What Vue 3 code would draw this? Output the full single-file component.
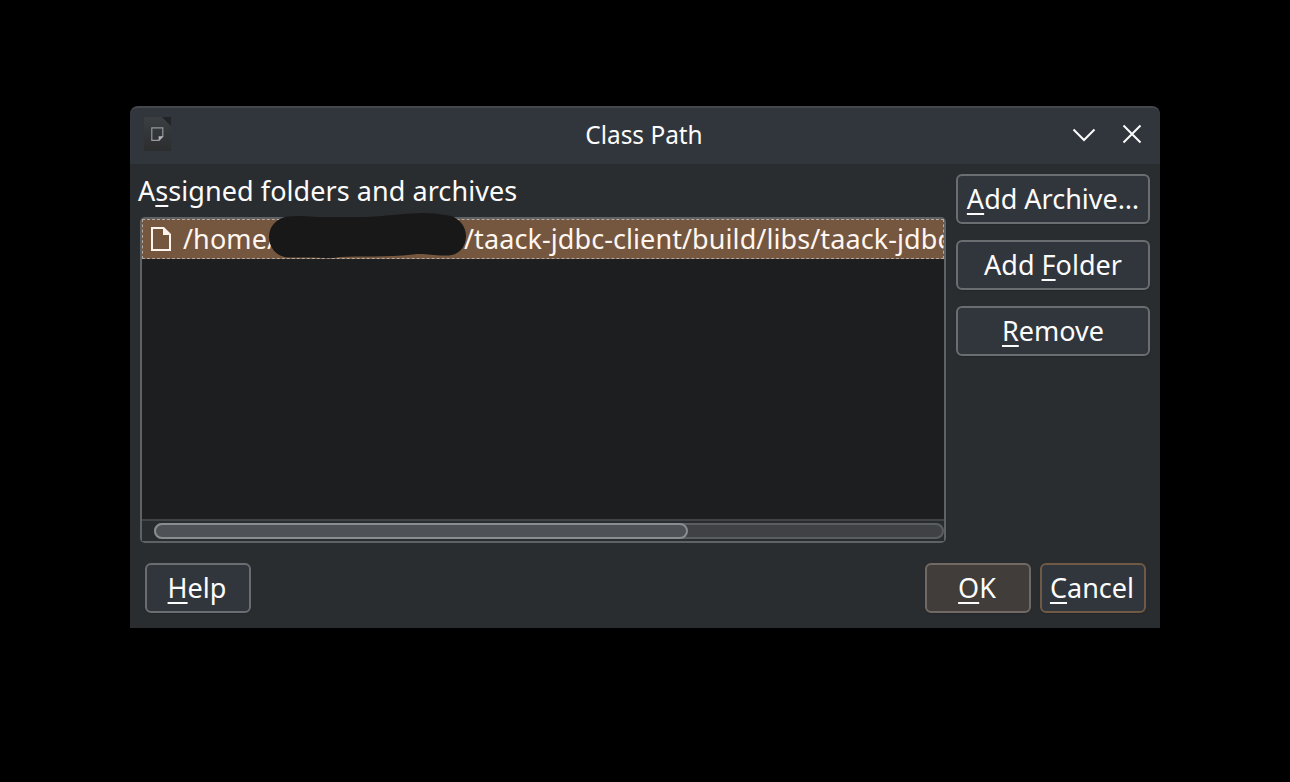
<script setup>
const actions = [
  { pre: '', key: 'A', post: 'dd Archive…', cls: 'archive' },
  { pre: 'Add ', key: 'F', post: 'older', cls: 'folder' },
  { pre: '', key: 'R', post: 'emove', cls: 'remove' },
]
</script>

<template>
  <div class="screen">
    <div class="dialog">
      <header class="titlebar">
        <svg class="app-icon" width="28" height="34" viewBox="0 0 28 34">
          <defs>
            <linearGradient id="doc" x1="0" y1="0" x2="0" y2="1">
              <stop offset="0" stop-color="#3b3f42" />
              <stop offset="1" stop-color="#2b2d2f" />
            </linearGradient>
          </defs>
          <path d="M0 0H18L27 9V34H0Z" fill="url(#doc)" />
          <path d="M18 0H27V9Z" fill="#222427" />
          <path d="M7.8 10.8H18.8V19.5L15 23.3H7.8Z" fill="none" stroke="#96999b" stroke-width="1.2" />
          <path d="M14.6 23.8V19.2H19.3Z" fill="#b3b5b6" />
        </svg>
        <h1 class="title">Class Path</h1>
        <div class="controls">
          <svg width="24" height="24" viewBox="0 0 24 24"><path d="M1.5 7.5L12 18L22.5 7.5" /></svg>
          <svg width="24" height="24" viewBox="0 0 24 24"><path d="M3.5 3.5L20.5 20.5M20.5 3.5L3.5 20.5" /></svg>
        </div>
      </header>

      <main class="content">
        <section class="paths">
          <label class="caption">A<u>s</u>signed folders and archives</label>
          <div class="list">
            <div class="row">
              <svg class="file" width="20" height="24" viewBox="0 0 20 24">
                <path d="M1 1H12.5L19 7.5V23H1Z" fill="none" stroke="#fff3ee" stroke-width="2" />
                <path d="M12 0V8H20Z" fill="#fff3ee" />
              </svg>
              <span class="home">/home/</span>
              <span class="path">/taack-jdbc-client/build/libs/taack-jdbc</span>
            </div>
            <div class="scrollbar"><div class="track"><div class="thumb"></div></div></div>
            <svg class="redaction" width="200" height="48" viewBox="0 0 200 48">
              <path d="M20 4.5C32 3 43 5 57 5H99C118 4 139 1 156 1C171 1 180 4 183 4C192 7 198 15 198 24C198 36 190 43.500 179 43.500C165 44 157 41 145 42.500C118 45.500 91 44 72 45C59 47.500 50 45 38 45.500H21C9 45 1 36 1 25C1 14 9 6 20 4.500Z" fill="#181818" />
            </svg>
          </div>
        </section>
        <aside class="actions">
          <button v-for="a in actions" :key="a.cls" class="btn" :class="a.cls"><span>{{ a.pre }}<u>{{ a.key }}</u>{{ a.post }}</span></button>
        </aside>
      </main>

      <footer class="footer">
        <button class="btn help"><span><u>H</u>elp</span></button>
        <button class="btn ok"><span><u>O</u>K</span></button>
        <button class="btn cancel"><span><u>C</u>ancel</span></button>
      </footer>
    </div>
  </div>
</template>

<style>
body { background: #000; overflow: hidden; }
</style>

<style scoped>
* { box-sizing: border-box; }
.screen { width: 1290px; height: 782px; padding: 106px 130px 0; background: #000; font-family: "Noto Sans", sans-serif; font-size: 27px; color: #fcfcfc; }
.dialog { width: 1030px; height: 522px; display: flex; flex-direction: column; background: #2a2d30; border-radius: 8px 8px 0 0; overflow: hidden; }
.titlebar { height: 58px; flex: none; display: grid; grid-template-columns: 100px 1fr 100px; align-items: center; background: #31363d; border-top: 2px solid #44484d; border-radius: 8px 8px 0 0; padding: 0 16px 0 14px; }
.app-icon { display: block; margin-top: -4px; }
.title { margin: -4px 0 0; font-size: 26px; font-weight: 400; line-height: 36px; text-align: center; white-space: nowrap; transform: scaleX(0.938); }
.controls { display: flex; gap: 24px; justify-content: flex-end; margin-top: -4px; }
.controls path { fill: none; stroke: #fcfcfc; stroke-width: 2; }
.content { display: flex; height: 379px; padding: 0 10px; gap: 10px; }
.paths { width: 806px; display: flex; flex-direction: column; }
.caption { height: 53px; padding-top: 8px; margin-left: -2px; line-height: 37px; letter-spacing: 0.06px; white-space: nowrap; }
u { text-decoration: underline; text-decoration-thickness: 2px; text-underline-offset: 4px; text-decoration-skip-ink: none; }
.list { position: relative; height: 326px; display: flex; flex-direction: column; border: 2px solid #5f6265; border-radius: 5px; background: #1d1e20; }
.row { height: 40px; display: flex; align-items: center; padding-left: 8px; overflow: hidden; background: #75573f; border: 1px dashed #b5aaa2; color: #fff6ef; line-height: 36px; letter-spacing: 0.08px; white-space: nowrap; }
.file { flex: none; }
.home { width: 281px; margin-left: 12px; flex: none; }
.path { flex: none; }
.scrollbar { margin-top: auto; height: 22px; padding: 2px 0 2px 12px; border-top: 2px solid #414346; background: #2a2d30; }
.track { height: 16px; border: 2px solid #5b5e61; border-radius: 8px; background: #404145; }
.thumb { width: 534px; height: 16px; margin: -2px; border: 2px solid #8a8d8f; border-radius: 8px; background: #4e5155; }
.redaction { position: absolute; left: 126px; top: -7px; }
.actions { width: 194px; display: flex; flex-direction: column; gap: 16px; padding-top: 10px; }
.btn { height: 50px; padding: 0 0 2px; border: 2px solid #6b6e71; border-radius: 6px; background: #31363d; color: inherit; font: inherit; line-height: 37px; white-space: nowrap; box-shadow: 0 1px 1px #24272a; }
.footer { display: flex; padding: 20px 14px 0 15px; }
.footer .btn { width: 106px; padding-right: 2px; }
.footer .ok { margin-left: auto; background: #403d3b; border-color: #716963; }
.footer .cancel { margin-left: 9px; border-color: #705945; }
</style>
